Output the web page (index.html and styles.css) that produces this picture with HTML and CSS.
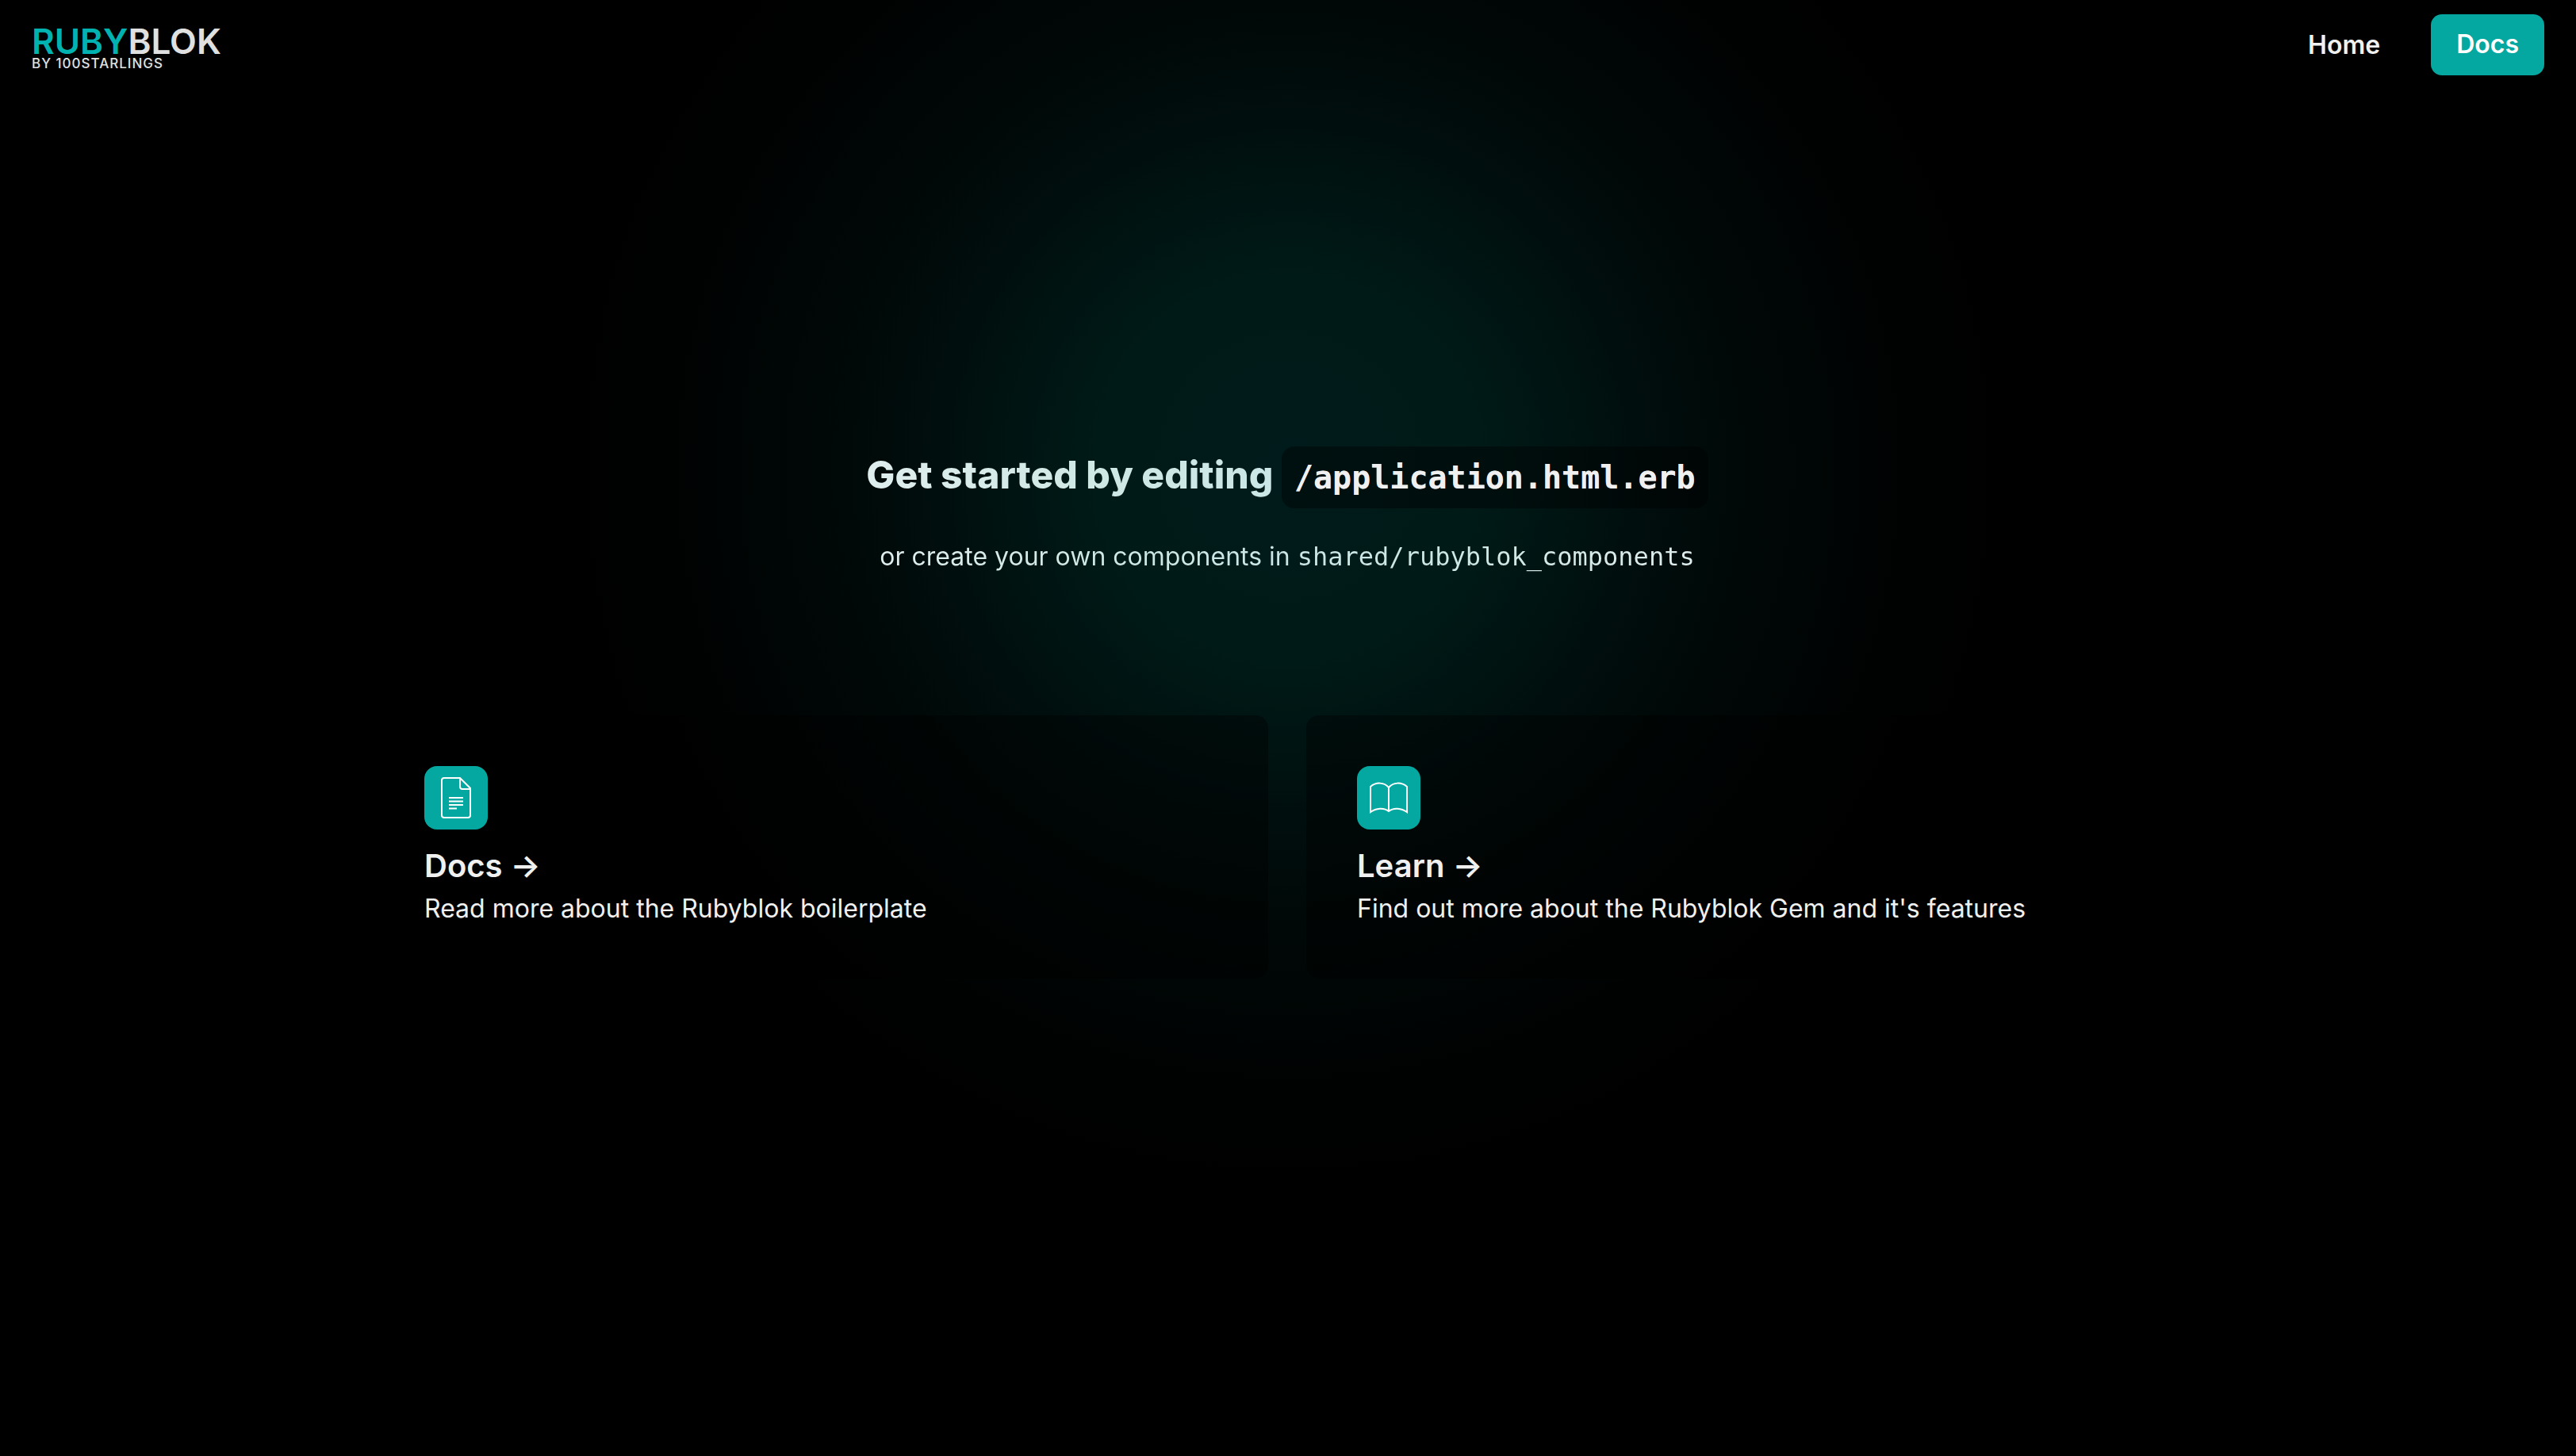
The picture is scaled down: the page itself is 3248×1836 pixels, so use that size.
FILE: index.html
```html
<!DOCTYPE html>
<html lang="en">
<head>
<meta charset="utf-8">
<title>Rubyblok</title>
<meta name="viewport" content="width=device-width, initial-scale=1">
<link rel="stylesheet" href="styles.css">
</head>
<body>
<header class="header">
  <a class="logo" href="#">
    <span class="logo-name"><span class="logo-ruby">RUBY</span><span>BLOK</span></span>
    <span class="logo-by">BY 100STARLINGS</span>
  </a>
  <nav class="nav">
    <a class="nav-link" href="#">Home</a>
    <a class="nav-button" href="#docs">Docs</a>
  </nav>
</header>
<main class="main">
  <section class="hero">
    <h1 class="hero-title">Get started by editing <code class="hero-file">/application.html.erb</code></h1>
    <p class="hero-text">or create your own components in <code class="hero-path">shared/rubyblok_components</code></p>
  </section>
  <section class="cards">
    <a class="card" id="docs" href="#docs">
      <span class="card-icon">
        <svg viewBox="0 0 80 80" aria-hidden="true"><path d="M25 15H45L58 28V62Q58 65 55 65H25Q22 65 22 62V18Q22 15 25 15ZM45 15V26Q45 29 48 29H58M31 40H49M31 44.500H49M31 49H49M31 53.500H41"/></svg>
      </span>
      <h2 class="card-title">Docs →</h2>
      <p class="card-text">Read more about the Rubyblok boilerplate</p>
    </a>
    <a class="card" id="learn" href="#learn">
      <span class="card-icon">
        <svg viewBox="0 0 80 80" aria-hidden="true"><path d="M40 27C34 20 24 20 17 26V58C24 53 34 52 40 57C46 52 56 53 63 58V26C56 20 46 20 40 27ZM40 27V57"/></svg>
      </span>
      <h2 class="card-title">Learn →</h2>
      <p class="card-text">Find out more about the Rubyblok Gem and it's features</p>
    </a>
  </section>
</main>
</body>
</html>
```
FILE: styles.css
```css
* { box-sizing: border-box; }

body {
  margin: 0;
  min-height: 100vh;
  background: #000 radial-gradient(circle 900px at 50% 590px, #001b1b 0%, #001a17 27%, #001311 41%, #000e0d 50%, #000908 62%, #000303 82%, #000 100%) no-repeat;
  color: #f0f0f0;
  font-family: Inter, "Liberation Sans", sans-serif;
  font-size: 32px;
  line-height: 48px;
}

a { color: inherit; text-decoration: none; }
h1, h2, p { margin: 0; }
code { font-family: "DejaVu Sans Mono", monospace; }

.header {
  display: flex;
  align-items: center;
  justify-content: space-between;
  height: 113px;
  padding: 0 40px;
}

.logo {
  display: flex;
  flex-direction: column;
  padding-top: 6px;
  color: #e0e0e0;
}
.logo-name {
  display: flex;
  font-size: 44px;
  font-weight: 600;
  line-height: 40px;
}
.logo-ruby { color: #00b3b0; }
.logo-by { font-size: 17px; font-weight: 500; line-height: 16px; letter-spacing: 1px; }

.nav { display: flex; align-items: center; gap: 64px; font-weight: 600; }
.nav-button {
  padding: 14px 32px 15px;
  border-radius: 14px;
  background: #05a8a0;
  color: #fff;
}

.main {
  display: flex;
  flex-direction: column;
  align-items: center;
  gap: 176px;
  padding: 446px 50px 96px 48px;
}

.hero {
  display: flex;
  flex-direction: column;
  gap: 36px;
  text-align: center;
}
.hero-title {
  font-size: 48px;
  font-weight: 800;
  line-height: 80px;
}
.hero-title, .hero-text {
  background: radial-gradient(circle 600px at 50% 50%, #cae6e6, #cfe8e4 40%, #e0eeee 90%);
  background-clip: text;
  color: transparent;
}
.hero-file {
  padding: 16px;
  border-radius: 16px;
  background: rgba(0, 0, 0, 0.4);
  color: #f0f0f0;
  font-size: 40px;
  font-weight: 700;
}

.cards {
  display: grid;
  grid-template-columns: repeat(2, 1fr);
  gap: 48px;
  width: 100%;
  max-width: 2304px;
}
.card {
  padding: 64px;
  border-radius: 16px;
  background: rgba(0, 0, 0, 0.4);
}
.card-icon {
  display: block;
  width: 80px;
  height: 80px;
  margin-bottom: 16px;
  border-radius: 16px;
  background: #05a8a0;
}
.card-icon svg {
  display: block;
  fill: none;
  stroke: #fff;
  stroke-width: 2;
}
.card-title { font-size: 40px; font-weight: 600; line-height: 60px; }
```
